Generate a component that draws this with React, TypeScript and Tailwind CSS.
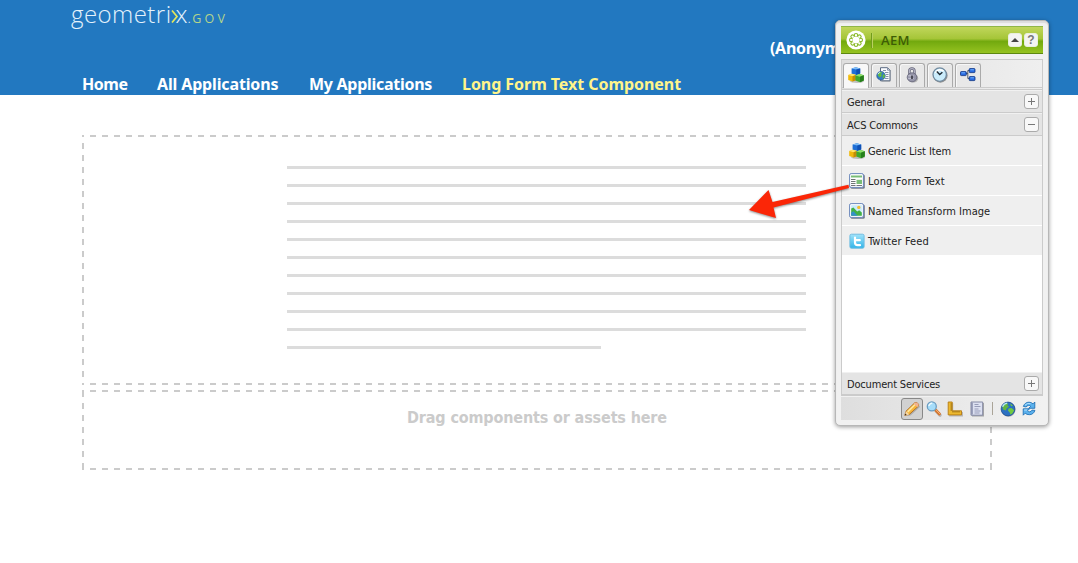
import React from "react";

type IconProps = { className?: string };

function Cubes({ className }: IconProps) {
  return (
    <svg className={className} width="16" height="16" viewBox="0 0 16 16">
      <ellipse cx="9" cy="14.3" rx="7" ry="1.6" fill="#000" opacity=".22" />
      <path d="M3.6 1.4 7.8.3l4.4 1.1v5.2L8.3 8 3.6 6.8z" fill="#1f6fd6" />
      <path d="m3.6 1.4 4.2-1.1 4.4 1.1-3.9 1.2z" fill="#7dbcf5" />
      <path d="M8.3 2.6V8l3.9-1.4V1.4z" fill="#0f50b4" />
      <path d="m.2 7.9 3.8-1.1 3.8 1.3v5.1l-3.3 1.3-4.3-1.5z" fill="#f0b90c" />
      <path d="M.2 7.9 4 6.8l3.8 1.3-3.3 1.2z" fill="#ffe46b" />
      <path d="M4.5 9.3v5.2l3.3-1.3V8.1z" fill="#c48c08" />
      <path d="m7.4 8.4 4.3-1.3 4.1 1.1v5.2l-3.8 1.8-4.6-1.6z" fill="#3fa82c" />
      <path d="m7.4 8.4 4.3-1.3 4.1 1.1L12 9.7z" fill="#8fe06c" />
      <path d="M12 9.7v5.5l3.8-1.8V8.2z" fill="#267e1c" />
    </svg>
  );
}

function PageGlobe() {
  return (
    <svg width="16" height="16" viewBox="0 0 16 16">
      <path d="M5.5 1.5h7l2 2v11h-9z" fill="#777" opacity=".6" />
      <path d="M4.5.7h7l2.5 2.5v10.6H4.5z" fill="#fafcff" stroke="#5c6c83" />
      <path d="M11.5.7v2.5H14M7 3.5h3M9 5.5h3.5M10 7.5h2.5M10 9.5h2.5M9 11.5h3.5" fill="none" stroke="#8593aa" />
      <circle cx="5" cy="8.7" r="4.3" fill="#347bc4" stroke="#275486" strokeWidth=".6" />
      <path d="M2 6.5 4 5l2.5.5L5 7.2l1 1.3-2 2-2-1.8zM7 7l2 1-.5 2.5-2 1z" fill="#61ba42" />
      <path d="M2 7.2a3.4 3.4 0 0 1 2.4-2" stroke="#cdebf7" strokeWidth=".9" fill="none" />
    </svg>
  );
}

function Lock() {
  return (
    <svg width="16" height="16" viewBox="0 0 16 16">
      <ellipse cx="9.3" cy="11.2" rx="4.9" ry="4.4" fill="#777" opacity=".5" />
      <path d="M5.4 8V4a2.5 2.5 0 0 1 5 0v4" fill="none" stroke="#656579" strokeWidth="2.5" />
      <path d="M5.4 7V4a2.5 2.5 0 0 1 5 0v3" fill="none" stroke="#b4b4c6" strokeWidth="1.1" />
      <ellipse cx="8" cy="10.3" rx="4.8" ry="4.5" fill="#9696aa" stroke="#656579" strokeWidth=".8" />
      <path d="M4.3 8.8h5.4M4.2 11.4h5.6" stroke="#c6c6d4" />
      <path d="M8 8.6v3.4" stroke="#34343f" strokeWidth="1.6" />
    </svg>
  );
}

function Clock() {
  return (
    <svg width="16" height="16" viewBox="0 0 16 16">
      <circle cx="8.4" cy="8.5" r="7.2" fill="#555" opacity=".6" />
      <circle cx="7.7" cy="7.6" r="6.7" fill="#caecfb" stroke="#718a9f" strokeWidth="1.3" />
      <path d="M3.5 5.8a5 5 0 0 1 8-1.6" stroke="#fff" strokeWidth="1.7" fill="none" />
      <path d="M4.8 4.6 7.7 7.6l2.7-2.4" stroke="#1f2b34" strokeWidth="1.4" fill="none" />
    </svg>
  );
}

function Workflow() {
  return (
    <svg width="16" height="16" viewBox="0 0 16 16">
      <path d="M5 6.5h3M10 3.5H7.8v8H10" fill="none" stroke="#58606c" />
      <g fill="#2a6be0" stroke="#0b3282" strokeWidth=".8">
        <rect x=".5" y="4.6" width="5.8" height="4" rx=".8" />
        <rect x="9.2" y="1.6" width="5.8" height="4" rx=".8" />
        <rect x="9.2" y="9.6" width="5.8" height="4" rx=".8" />
      </g>
      <path d="M1.5 5.8h3.5M10.4 2.8h3.5M10.4 10.8h3.5" stroke="#70b1ff" />
    </svg>
  );
}

function LongText() {
  return (
    <svg width="16" height="16" viewBox="0 0 16 16">
      <rect x="1.6" y="1.6" width="14.2" height="14.2" rx="1.5" fill="#555d6e" opacity=".8" />
      <rect x=".6" y=".6" width="13.8" height="13.8" rx="1.5" fill="#fff" stroke="#6a87bb" />
      <path d="M2 3.5h11" stroke="#79bd76" strokeWidth="2" />
      <path d="M7.5 6.8H13v4.2H7.5z" fill="#79bd76" />
      <path d="M2 6.5h4.5M2 8.5h4.5M2 10.5h4.5M2 12.5h4.5M7.5 12.5H13" stroke="#6f7577" />
    </svg>
  );
}

function Picture() {
  return (
    <svg width="16" height="16" viewBox="0 0 16 16">
      <rect x="1.6" y="1.6" width="14.2" height="14.2" rx="1.5" fill="#555d6e" opacity=".8" />
      <rect x=".6" y=".6" width="13.8" height="13.8" rx="1.5" fill="#fff" stroke="#6a87bb" />
      <path d="M2.2 2.2h10.6v10.6H2.2z" fill="#c9ebfb" />
      <path d="M2.2 5.6 4.4 4.6l3.8 4 2-1.4 2.6 2.4v3.2H2.2z" fill="#43b044" />
      <path d="m2.2 9.6 2.4-1.4 4 4.6H2.2z" fill="#3390c8" />
      <circle cx="9.8" cy="4.4" r="1.7" fill="#f6bd2f" />
    </svg>
  );
}

function Twitter() {
  return (
    <svg width="16" height="16" viewBox="0 0 16 16">
      <defs>
        <linearGradient id="bird" x2="0" y2="1">
          <stop stopColor="#a1e3fa" />
          <stop offset="1" stopColor="#31b4e8" />
        </linearGradient>
      </defs>
      <rect x=".9" y="1.2" width="14.2" height="14" rx="1.5" fill="url(#bird)" stroke="#72bde1" />
      <path d="M6 4.6v5q0 2.6 2.6 2.6h2.4M6 7.2h4.8" stroke="#fff" strokeWidth="2.2" strokeLinecap="round" fill="none" />
    </svg>
  );
}

function Pencil() {
  return (
    <svg width="16" height="16" viewBox="0 0 16 16">
      <path d="m3 15 3.5-.5L16 6l-1-2z" fill="#666" opacity=".35" />
      <path d="M.8 14.4 2 10.2 10.7 1.8q1.4-1 3 .4 1.6 1.4.6 3L5.4 13.4z" fill="#f5b43a" stroke="#a76218" strokeWidth=".8" />
      <path d="m3 10.3 8-7.7 1.2 1L4.3 11.4z" fill="#ffe79a" />
      <path d="M.8 14.4 2 10.2l3.4 3.2z" fill="#f5d9a8" />
      <path d="m.8 14.4.5-1.8 1.4 1.2z" fill="#3b2a18" />
      <path d="M10.7 1.8q1.4-1 3 .4 1.6 1.4.6 3l-1 .9-3.6-3.4z" fill="#f1b292" />
    </svg>
  );
}

function Magnifier() {
  return (
    <svg width="16" height="16" viewBox="0 0 16 16">
      <path d="m10 9.8 4 4.4" stroke="#777" strokeWidth="3.4" opacity=".4" strokeLinecap="round" />
      <path d="m9.6 9 3.8 4" stroke="#d6762d" strokeWidth="3" strokeLinecap="round" />
      <path d="m9.8 8.6 3.8 4" stroke="#f4b27a" strokeWidth="1" strokeLinecap="round" />
      <circle cx="5.8" cy="5.4" r="4.5" fill="#a6ddfa" stroke="#6b9dc1" strokeWidth="1.3" />
      <path d="M2.9 5a3 3 0 0 1 3.4-2.6" stroke="#eefaff" strokeWidth="1.5" fill="none" />
    </svg>
  );
}

function Ruler() {
  return (
    <svg width="16" height="16" viewBox="0 0 16 16">
      <path d="M2.2 2h4v9h9.8v4.5H2.2z" fill="#888" opacity=".5" />
      <path d="M1.2 1h4v8.8h9.3v4.1H1.2z" fill="#edb92f" stroke="#b47b13" strokeWidth=".9" />
      <path d="M3.5 3h1.5M3.5 5h1.5M3.5 7h1.5M3.5 9h1.5M6 10v1.5M8 10v1.5M10 10v1.5M12 10v1.5" stroke="#785413" strokeWidth=".8" />
    </svg>
  );
}

function Sheet() {
  return (
    <svg width="16" height="16" viewBox="0 0 16 16">
      <path d="M3 2h12v13.5H3z" fill="#777" opacity=".6" />
      <path d="M2 1h11.7v13.2H2z" fill="#dce0f1" stroke="#858aa6" />
      <path d="M3 1.5v12" stroke="#8087a5" strokeWidth="1.4" />
      <path d="M5.5 3.5h4M5.5 5.5h6M5.5 8h4M5.5 10h6M5.5 12h5" stroke="#979cb8" />
    </svg>
  );
}

function Globe() {
  return (
    <svg width="16" height="16" viewBox="0 0 16 16">
      <circle cx="8.5" cy="8.8" r="7" fill="#777" opacity=".5" />
      <circle cx="8" cy="8" r="6.9" fill="#2b70c2" stroke="#1d4b91" strokeWidth=".8" />
      <path d="M2.3 5.2a7 7 0 0 1 4-3.2l2 .7-1 1.6L9 5.4 6.6 7.5l-.8 2L3 8.4z" fill="#62b643" />
      <path d="m8.5 7.5 3-.6 2.6 2.4-1.5 3-2.1 1.4-.9-2.5-1.6-1.4zM10 2.5l3 2-1.8.8z" fill="#72ca3f" />
      <path d="M2.6 5.8a5.6 5.6 0 0 1 4.6-3.6" stroke="#b7e8f6" strokeWidth="1.3" fill="none" />
    </svg>
  );
}

function Refresh() {
  return (
    <svg width="16" height="16" viewBox="0 0 16 16">
      <g fill="#5bb1ed" stroke="#1768ae" strokeWidth=".8" strokeLinejoin="round">
        <path d="M2.3 5.4Q4 1.2 8 1.2q2.5 0 4 1.7L13.8 1v6.3H7.7l2-2Q8.8 4.3 7.6 4.4 6 4.5 5.2 6z" />
        <path d="M14 9.4q-1.7 4.3-5.7 4.3-2.6 0-4.1-1.5l-2 2V7.8h6.3l-2 2q.9 1 2 1 1.7 0 2.5-1.7z" />
      </g>
      <path d="M4 4.3Q6 1.7 9.5 2.6M3.2 9h3" stroke="#b6e4ff" fill="none" />
    </svg>
  );
}

function Logo() {
  return (
    <svg width="20" height="20" viewBox="0 0 20 20">
      <circle cx="10" cy="10" r="9.6" fill="#fff" />
      <g fill="none" stroke="#8aba28" strokeWidth="1.1">
        {[0, 45, 90, 135, 180, 225, 270, 315].map((a) => (
          <circle key={a} cx="10" cy="5.2" r="1.7" transform={`rotate(${a} 10 10)`} />
        ))}
      </g>
      <circle cx="10" cy="10" r="3.6" fill="#fff" />
    </svg>
  );
}

const tabs = [Cubes, PageGlobe, Lock, Clock, Workflow];

const components = [
  { label: "Generic List Item", Icon: Cubes, track: "tracking-[-0.08px]" },
  { label: "Long Form Text", Icon: LongText, track: "tracking-[0.14px]" },
  { label: "Named Transform Image", Icon: Picture, track: "tracking-[0.02px]" },
  { label: "Twitter Feed", Icon: Twitter, track: "tracking-[0.1px]" },
];

function GroupHeader({ label, open }: { label: string; open?: boolean }) {
  return (
    <div className="flex h-[23px] shrink-0 items-center justify-between border-t border-b border-t-[#f1f1f1] border-b-[#cbcbcb] bg-[#e4e4e4] pr-[3px] pl-[5px]">
      <span className="pt-[2px] tracking-[-0.18px]">{label}</span>
      <span className="flex size-[15px] items-center justify-center rounded-[3px] border border-[#aaa] bg-[#f8f8f8]">
        <svg width="7" height="7" viewBox="0 0 7 7">
          <path d={open ? "M0 3.5h7" : "M0 3.5h7M3.5 0v7"} stroke="#777" />
        </svg>
      </span>
    </div>
  );
}

function Sidekick() {
  return (
    <aside className="absolute top-[20px] left-[835px] flex h-[406px] w-[214px] flex-col rounded-[5px] border border-[#b7b7b7] bg-[#f1f1f1] p-[5px] font-['DejaVu_Sans_Condensed','DejaVu_Sans',sans-serif] text-[11px] leading-[14px] whitespace-nowrap text-[#222] shadow-[0_1px_4px_rgba(0,0,0,0.4),inset_0_2px_1px_#dcdcdc]">
      <div className="flex h-[28px] shrink-0 items-center border-t border-b border-t-[#90b647] border-b-[#5d8810] bg-[linear-gradient(#c0d65b_0%,#a5c538_45%,#72a90e_55%,#96c321_100%)] px-[5px]">
        <Logo />
        <span className="ml-[5px] h-[15px] w-[2px] border-l border-[#719c1b] bg-[#b9d160]" />
        <span className="ml-[8px] font-['Open_Sans',sans-serif] text-[13px] font-semibold tracking-[0.3px] text-[#3e5d05]">AEM</span>
        <span className="ml-auto flex gap-[2px]">
          <span className="flex size-[14px] items-center justify-center rounded-[3px] border border-[#e9efdd] bg-[#f4f4f2]">
            <svg width="8" height="5" viewBox="0 0 8 5"><path d="m4 0 4 4H0z" fill="#444" /></svg>
          </span>
          <span className="flex size-[14px] items-center justify-center rounded-[3px] border border-[#e9efdd] bg-[#f4f4f2] font-['Liberation_Sans',sans-serif] text-[12px] font-bold text-[#777]">?</span>
        </span>
      </div>

      <div className="mt-[5px] flex h-[337px] shrink-0 flex-col border border-[#cbcbcb] bg-white">
        <div className="flex h-[30px] shrink-0 flex-col border-b border-[#cbcbcb] bg-[linear-gradient(90deg,#dedede,#efefef)] pt-[3px]">
          <div className="flex gap-[2px] border-b border-[#cbcbcb] pl-px">
            {tabs.map((Icon, i) => (
              <span
                key={i}
                className={
                  i === 0
                    ? "-mb-px flex h-[25px] w-[26px] items-center justify-center rounded-t-[3px] border border-b-0 border-[#aaa] bg-[#f8f8f8] pr-px pb-[2px]"
                    : "flex h-[24px] w-[26px] items-center justify-center rounded-t-[3px] border border-b-0 border-[#aaa] bg-[#e8e8e8] pb-px shadow-[inset_1px_1px_0_#f7f7f7]"
                }
              >
                <Icon />
              </span>
            ))}
          </div>
        </div>
        <GroupHeader label="General" />
        <GroupHeader label="ACS Commons" open />
        <div className="grow">
          {components.map(({ label, Icon, track }) => (
            <div key={label} className="flex h-[30px] items-center gap-[3px] border-b border-white bg-[#efefef] pl-[7px]">
              <Icon />
              <span className={`pt-[2px] ${track}`}>{label}</span>
            </div>
          ))}
        </div>
        <GroupHeader label="Document Services" />
      </div>

      <div className="mt-px flex h-[23px] shrink-0 items-center bg-[linear-gradient(90deg,#dedede,#f1f1f1)] pl-[60px]">
        <span className="flex size-[22px] items-center justify-center rounded-[3px] border border-[#888] bg-[#d1d1d1]">
          <Pencil />
        </span>
        <span className="ml-[3px]"><Magnifier /></span>
        <span className="ml-[5px]"><Ruler /></span>
        <span className="ml-[6px]"><Sheet /></span>
        <span className="ml-[7px] h-[13px] w-px bg-[#aaa498]" />
        <span className="ml-[7px]"><Globe /></span>
        <span className="ml-[5px]"><Refresh /></span>
      </div>
    </aside>
  );
}

export default function App() {
  return (
    <div className="relative h-[563px] w-[1078px] overflow-hidden bg-white">
      <header className="flex h-[95px] flex-col justify-between bg-[#2278c0] font-['Noto_Sans','Open_Sans',sans-serif] whitespace-nowrap text-white">
        <div className="flex h-[60px] items-start justify-between pl-[71px]">
          <div className="flex items-baseline font-['Open_Sans',sans-serif] text-[24px] leading-[28px] font-light text-[#e4f2fc]">
            <span className="tracking-[0.45px]">geometri</span>
            <svg className="-ml-px" width="8" height="13" viewBox="0 0 8 13">
              <path d="m1 .5 5 6-5 6" fill="none" stroke="#e3e75a" strokeWidth="1.7" />
            </svg>
            <span className="-ml-[3px]">x</span>
            <span className="text-[14px] tracking-[1.5px]">.</span>
            <span className="text-[12.5px] font-normal tracking-[3.2px] text-[#b5d58c]">GOV</span>
          </div>
          <span className="mt-[37px] w-[308px] text-[16px] leading-[22px] font-bold tracking-[-0.3px]">(Anonymous)</span>
        </div>
        <nav className="flex h-[22px] gap-[30px] pl-[82px] text-[16px] leading-[22px] font-bold">
          <a className="w-[45px] tracking-[-0.45px]">Home</a>
          <a className="w-[122px] tracking-[-0.14px]">All Applications</a>
          <a className="w-[123px] tracking-[-0.28px]">My Applications</a>
          <a className="tracking-[-0.05px] text-[#fff48a]">Long Form Text Component</a>
        </nav>
      </header>

      <main className="ml-[82px] flex w-[910px] flex-col gap-[5px] pt-[40px]">
        <section className="flex h-[250px] flex-col gap-[15px] bg-[linear-gradient(90deg,#cbcbcb_50%,transparent_50%),linear-gradient(90deg,#cbcbcb_50%,transparent_50%),linear-gradient(#cbcbcb_50%,transparent_50%),linear-gradient(#cbcbcb_50%,transparent_50%)] [background-position:-4px_0,-4px_248px,0_-4px,908px_-4px] [background-repeat:repeat-x,repeat-x,repeat-y,repeat-y] [background-size:12px_2px,12px_2px,2px_12px,2px_12px] pt-[31px] pl-[205px]">
          {Array.from({ length: 11 }, (_, i) => (
            <div key={i} className={i === 10 ? "h-[3px] w-[314px] bg-[#dcdcdc]" : "h-[3px] w-[519px] bg-[#dcdcdc]"} />
          ))}
        </section>
        <section className="h-[80px] bg-[linear-gradient(90deg,#cbcbcb_50%,transparent_50%),linear-gradient(90deg,#cbcbcb_50%,transparent_50%),linear-gradient(#cbcbcb_50%,transparent_50%),linear-gradient(#cbcbcb_50%,transparent_50%)] [background-position:-4px_0,-4px_78px,0_1px,908px_1px] [background-repeat:repeat-x,repeat-x,repeat-y,repeat-y] [background-size:12px_2px,12px_2px,2px_12px,2px_12px] pt-[18px] text-center font-['DejaVu_Sans_Condensed','DejaVu_Sans',sans-serif] text-[16px] leading-[20px] font-bold tracking-[-0.15px] text-[#cbcbcb]">
          Drag components or assets here
        </section>
      </main>

      <Sidekick />

      <svg className="absolute top-[180px] left-[740px] drop-shadow-[0_1px_1px_rgba(0,0,0,0.45)]" width="115" height="50" viewBox="0 0 115 50">
        <path d="M9 30 28.5 10l4 12L108.5 4.8l.5 3.2L33.5 27.5l2.5 10.5z" fill="#fb2607" />
      </svg>
    </div>
  );
}
